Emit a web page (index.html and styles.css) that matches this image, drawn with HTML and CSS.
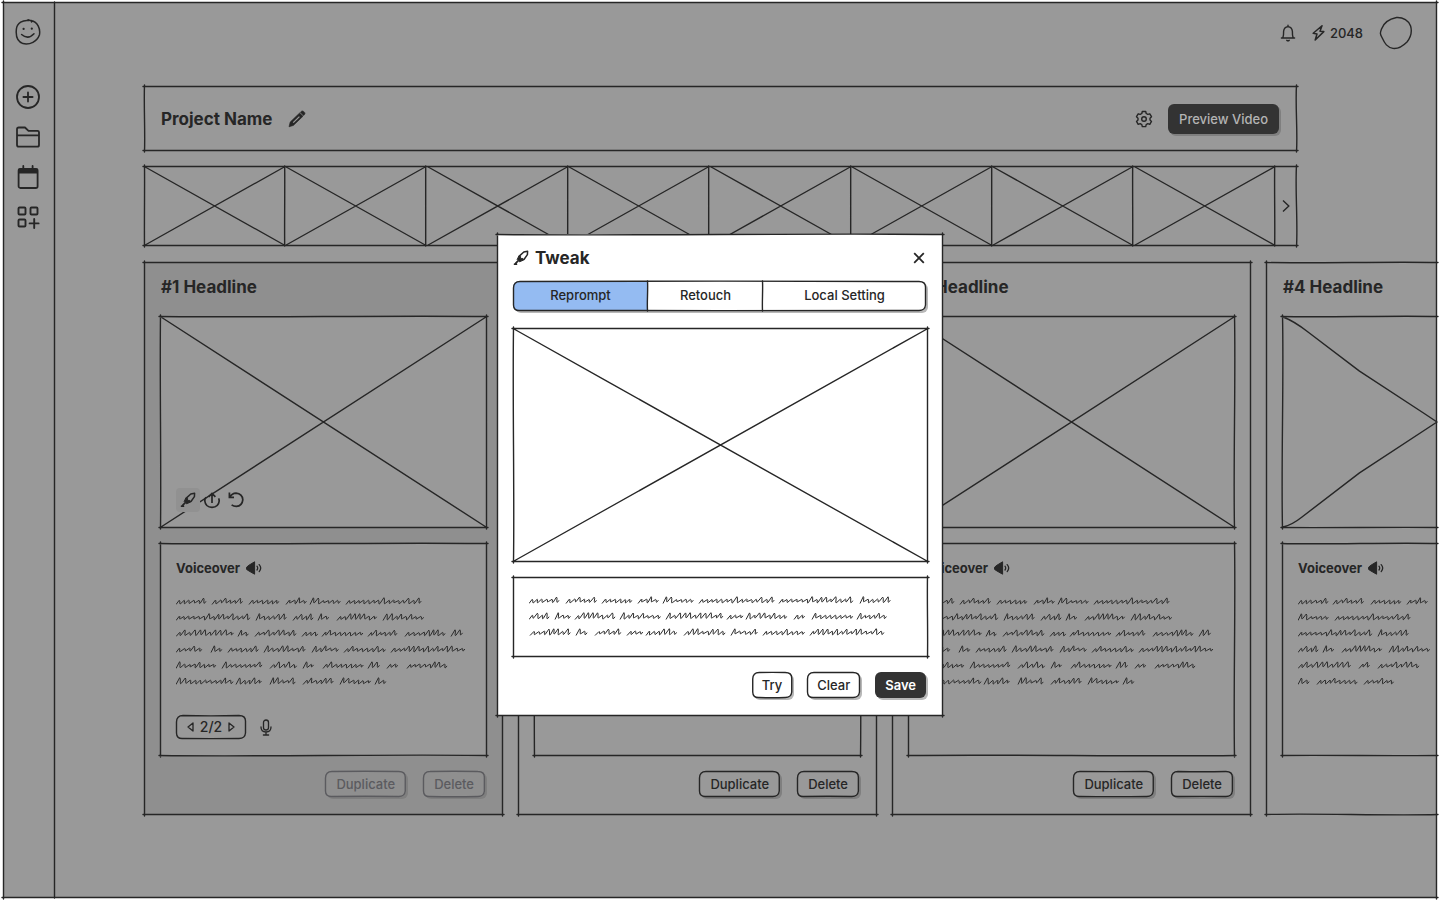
FILE: index.html
```html
<!DOCTYPE html>
<html lang="en">
<head>
<meta charset="utf-8">
<title>Project Name</title>
<link rel="stylesheet" href="styles.css">
</head>
<body>
<svg class="defs" aria-hidden="true">
  <symbol id="i-brush" viewBox="0 0 16 16"><path d="M6 6.400 10.800 2 14.600 1.200 14.400 4.600 10.800 9.800" fill="none" stroke="currentColor" stroke-width="1.500" stroke-linejoin="round"/><path d="M5.800 6 4.200 9.600 6.400 11.800 10.800 10 9.800 8.400 7.600 8.800 7.600 6.400Z" fill="currentColor" stroke="currentColor" stroke-width="1" stroke-linejoin="round"/><path d="M4.800 11.200 2.800 13.200M1.600 14.200h1.800" stroke="currentColor" stroke-width="1.800" stroke-linecap="round" fill="none"/></symbol>
  <symbol id="i-speaker" viewBox="0 0 16 14"><path d="M.6 6.2 3 4.2 8.6.8V13.2L3 10 .6 8.4Z" fill="currentColor" stroke="currentColor" stroke-linejoin="round"/><path d="M11 5.2q1.4 1.9 0 3.8M13.2 3.6q3 3.4 0 7" fill="none" stroke="currentColor" stroke-width="1.3" stroke-linecap="round"/></symbol>
</svg>

<div class="app sketch">
  <aside class="sidebar sketch rail">
    <a class="logo" href="#" aria-label="Home"><svg width="26" height="26" viewBox="0 0 26 26" fill="none" stroke="currentColor" stroke-width="1.5" stroke-linecap="round"><path d="M14 1.6C8 .6 2 4 1.4 10 .6 17 2 22.600 8 24.600 15 26 22 22.600 24.400 16 25.600 10 23 3 16 1.600L13 .8M16 1.600 16.600 3"/><path d="M6.600 15.500q6.400 5.600 12.400-.8"/><path d="M8.600 9.800v.1M16.800 9.600v.1" stroke-width="2.200"/></svg></a>
    <nav class="nav">
      <button aria-label="New"><svg width="24" height="24" viewBox="0 0 24 24" fill="none" stroke="currentColor" stroke-width="1.800" stroke-linecap="round"><circle cx="12" cy="12" r="11"/><path d="M12 7.400v9.200M7.400 12h9.200"/></svg></button>
      <button aria-label="Folders"><svg width="24" height="24" viewBox="0 0 24 24" fill="none" stroke="currentColor" stroke-width="1.800" stroke-linejoin="round"><path d="M1 4.200Q1 2.500 2.700 2.500H9L12.500 5.800H21.500Q23 5.800 23 7.300V20Q23 21.700 21.300 21.700H2.700Q1 21.700 1 20ZM1 10.400H23"/></svg></button>
      <button aria-label="Calendar"><svg width="24" height="24" viewBox="0 0 24 24" fill="none" stroke="currentColor" stroke-width="1.800" stroke-linecap="round"><rect x="2.600" y="4" width="19" height="19" rx="1.800"/><path d="M3.500 4.500H20.700V7.600H3.500Z" fill="currentColor"/><path d="M7.300 1v3M16.600 1v3"/></svg></button>
      <button aria-label="Add widget"><svg width="24" height="24" viewBox="0 0 24 24" fill="none" stroke="currentColor" stroke-width="1.900" stroke-linecap="round"><rect x="2.500" y="2.500" width="7" height="7" rx="1"/><rect x="14.500" y="2.500" width="7" height="7" rx="1"/><rect x="2.500" y="14.500" width="7" height="7" rx="1"/><path d="M18.200 14v9M13.600 18.400h9"/></svg></button>
    </nav>
  </aside>

  <main class="main">
    <header class="topbar">
      <button aria-label="Notifications"><svg width="16" height="18" viewBox="0 0 16 18" fill="none" stroke="currentColor" stroke-width="1.400" stroke-linecap="round" stroke-linejoin="round"><path d="M8 1.200v1.400M1.400 14H14.600M2.800 14Q3.800 11 3.600 7.400 4 3 8 2.600 12 3 12.400 7.400 12.200 11 13.200 14M6.800 16.300q1.200.8 2.400 0"/></svg></button>
      <span class="credits"><svg width="13" height="16" viewBox="0 0 13 16" fill="none" stroke="currentColor" stroke-width="1.500" stroke-linejoin="round"><path d="M10 .8 1.200 8.200 5 9 3.200 15 11.800 6.600 8 6.200Z"/></svg>2048</span>
      <button aria-label="Account"><svg width="34" height="34" viewBox="0 0 34 34" fill="none" stroke="currentColor" stroke-width="1.400"><path d="M17.500 1.500C24 1 30 5 31.600 10 33 15 32 21 28 26 24 30 19 33 14 32.400 8 31 6 28 3 21.500 1 18 1 17 2.500 13 5 6 10 3 17.500 1.500Z"/></svg></button>
    </header>

    <div class="board">
      <section class="project sketch">
        <h1>Project Name</h1>
        <button aria-label="Rename"><svg width="18" height="18" viewBox="0 0 18 18"><path d="M1 16.800 2.200 12 11.600 3 15 6.200 5.400 15.400ZM12.400 2.200 13.600 1.200Q14.600.6 15.600 1.400L16.600 2.400Q17.400 3.400 16.600 4.400L15.600 5.500Z" fill="currentColor" stroke="currentColor" stroke-width=".6" stroke-linejoin="round"/><path d="M5.200 12.600 11.400 6.600" stroke="#999" stroke-width="1.300"/></svg></button>
        <button class="gear" aria-label="Settings"><svg width="18" height="18" viewBox="0 0 18 18" fill="none" stroke="currentColor" stroke-width="1.400" stroke-linejoin="round"><path d="M7.300 1.500H10.700L11.200 3.500 12.800 4.400 14.800 3.800 16.500 6.700 15 8.200V9.900L16.500 11.400 14.800 14.300 12.800 13.700 11.200 14.600 10.700 16.600H7.300L6.800 14.600 5.200 13.700 3.200 14.300 1.500 11.400 3 9.900V8.200L1.500 6.700 3.200 3.800 5.200 4.400 6.800 3.500Z"/><circle cx="9" cy="9" r="2.300"/></svg></button>
        <button class="btn preview">Preview Video</button>
      </section>

      <section class="strip sketch" aria-label="Scenes">
        <div class="thumb sketch rail cross"></div><div class="thumb sketch rail cross"></div><div class="thumb sketch rail cross"></div><div class="thumb sketch rail cross"></div><div class="thumb sketch rail cross"></div><div class="thumb sketch rail cross"></div><div class="thumb sketch rail cross"></div><div class="thumb sketch rail cross"></div>
        <button class="next" aria-label="Next scenes"><svg width="8" height="14" viewBox="0 0 8 14" fill="none" stroke="currentColor" stroke-width="1.400"><path d="M1 1.500 6.800 7 1 12.500"/></svg></button>
      </section>

      <div class="cards">
        <article class="card active sketch">
          <h2>#1 Headline</h2>
          <div class="picture sketch cross">
            <div class="tools">
              <button class="on" aria-label="Tweak"><svg width="16" height="16"><use href="#i-brush"/></svg></button>
              <button aria-label="Upload"><svg width="18" height="18" viewBox="0 0 18 18" fill="none" stroke="currentColor" stroke-width="1.700"><path d="M3 6.400Q1.600 7.600 1.800 10 2.600 16.200 9 16.400 15.600 16 16.200 10 16.200 8.600 15.600 7.400M9 12V3M5.600 5.800 9 2.400 12.400 5.800"/></svg></button>
              <button aria-label="Undo"><svg width="18" height="18" viewBox="0 0 18 18" fill="none" stroke="currentColor" stroke-width="1.700"><path d="M2.400 1.600V6.400H7M2.800 6Q5 2.400 9 2.200 15.400 2.800 15.800 8.800 15.200 14.800 9.400 15.400 6.600 15.400 4.600 13.800"/></svg></button>
            </div>
          </div>
          <div class="voice sketch">
            <h3>Voiceover <svg width="16" height="14"><use href="#i-speaker"/></svg></h3>
            <div class="scribble" data-text="body"></div>
            <div class="takes">
              <div class="pager sketch round">
                <button aria-label="Previous take"><svg width="7" height="10" viewBox="0 0 7 10"><path d="M6 1V9L1 5Z" fill="none" stroke="currentColor" stroke-width="1.300" stroke-linejoin="round"/></svg></button>
                <span>2/2</span>
                <button aria-label="Next take"><svg width="7" height="10" viewBox="0 0 7 10"><path d="M1 1V9L6 5Z" fill="none" stroke="currentColor" stroke-width="1.300" stroke-linejoin="round"/></svg></button>
              </div>
              <button aria-label="Record"><svg width="12" height="17" viewBox="0 0 12 17" fill="none" stroke="currentColor" stroke-width="1.300" stroke-linecap="round"><rect x="3.500" y="1" width="5" height="10" rx="2.500"/><path d="M1 8Q1 13 6 13T11 8M6 13V16M3.400 16H8.600"/></svg></button>
            </div>
          </div>
          <footer><button class="btn sketch round" disabled>Duplicate</button><button class="btn sketch round" disabled>Delete</button></footer>
        </article>

        <article class="card sketch">
          <h2>#2 Headline</h2>
          <div class="picture sketch cross"></div>
          <div class="voice sketch"><h3>Voiceover <svg width="16" height="14"><use href="#i-speaker"/></svg></h3><div class="scribble" data-text="body"></div></div>
          <footer><button class="btn sketch round">Duplicate</button><button class="btn sketch round">Delete</button></footer>
        </article>

        <article class="card sketch">
          <h2>#3 Headline</h2>
          <div class="picture sketch cross"></div>
          <div class="voice sketch"><h3>Voiceover <svg width="16" height="14"><use href="#i-speaker"/></svg></h3><div class="scribble" data-text="body"></div></div>
          <footer><button class="btn sketch round">Duplicate</button><button class="btn sketch round">Delete</button></footer>
        </article>

        <article class="card cut sketch open">
          <h2>#4 Headline</h2>
          <div class="picture sketch open wedge"></div>
          <div class="voice sketch open"><h3>Voiceover <svg width="16" height="14"><use href="#i-speaker"/></svg></h3><div class="scribble" data-text="short"></div></div>
        </article>
      </div>
    </div>
  </main>
</div>

<div class="overlay">
  <section class="modal sketch" role="dialog" aria-labelledby="modal-title">
    <header>
      <svg width="16" height="16"><use href="#i-brush"/></svg>
      <h2 id="modal-title">Tweak</h2>
      <button aria-label="Close"><svg width="12" height="12" viewBox="0 0 12 12" fill="none" stroke="currentColor" stroke-width="1.800"><path d="M1.200 1.200 10.800 10.800M10.800 1.200 1.200 10.800"/></svg></button>
    </header>
    <div class="tabs sketch round" role="tablist">
      <button class="sketch rail" role="tab" aria-selected="true">Reprompt</button>
      <button class="sketch rail" role="tab" aria-selected="false">Retouch</button>
      <button role="tab" aria-selected="false">Local Setting</button>
    </div>
    <div class="shot sketch cross"></div>
    <div class="prompt sketch"><div class="scribble" data-text="prompt"></div></div>
    <footer><button class="btn sketch round">Try</button><button class="btn sketch round">Clear</button><button class="btn dark">Save</button></footer>
  </section>
</div>
<script src="sketch.js"></script>
</body>
</html>
```

FILE: styles.css
```css
:root {
  --ink: #262626;
  --dim: #999;
  --dim-active: #8f8f8f;
}
* { box-sizing: border-box; }
body {
  margin: 0;
  padding: 2px 3px;
  background: #fff;
  color: var(--ink);
  font: 500 13px/20px Inter, "Open Sans", sans-serif;
}
h1, h2, h3 { margin: 0; font-weight: 700; }
button {
  margin: 0;
  padding: 0;
  border: 0;
  background: none;
  color: inherit;
  font: inherit;
}
svg { display: block; flex: none; }
.defs { position: absolute; width: 0; height: 0; }
.sketch { position: relative; }
.outline {
  position: absolute;
  inset: 0;
  width: 100%;
  height: 100%;
  overflow: visible;
  pointer-events: none;
  fill: none;
  stroke: currentColor;
  stroke-width: 1.4;
  stroke-linecap: round;
  stroke-linejoin: round;
}

.app {
  display: flex;
  min-height: calc(100vh - 4px);
  background: var(--dim);
}
.sidebar {
  flex: none;
  width: 52px;
  padding-top: 17px;
}
.logo { display: grid; place-items: center; padding-right: 2px; color: inherit; }
.nav { display: flex; flex-direction: column; margin-top: 32px; padding-right: 2px; }
.nav button { display: grid; place-items: center; height: 40px; }

.main { flex: 1; min-width: 0; }
.topbar {
  display: flex;
  align-items: center;
  justify-content: flex-end;
  gap: 16px;
  height: 84px;
  padding: 0 24px 22px 0;
}
.credits { display: flex; align-items: center; gap: 5px; }

.board { padding-left: 89px; }
.project {
  display: flex;
  align-items: center;
  height: 65px;
  margin: 0 140px 15px 0;
  padding: 0 18px 0 17px;
}
h1 { margin-right: 16px; font-size: 17px; line-height: 24px; }
.gear { margin: 0 15px 0 auto; }
.btn {
  padding: 0 11px;
  height: 26px;
  border-radius: 6px;
  line-height: 24px;
  box-shadow: 2px 2px 0 #7f7f7f;
}
.preview {
  height: 30px;
  line-height: 28px;
  background: #333;
  color: #b4b4b4;
}
.strip {
  display: flex;
  height: 80px;
  margin: 0 140px 16px 0;
}
.thumb { flex: 1; }
.next { display: grid; place-items: center; width: 22px; }

.cards { display: flex; gap: 15px; }
.card { flex: 0 0 359px; min-height: 553px; padding: 13px 16px 17px; }
.card.active { background: var(--dim-active); }
.card.cut { flex: 1 1 0; min-width: 0; padding-right: 0; }
.card h2 { padding-left: 1px; font-size: 17px; line-height: 24px; }
.picture { height: 212px; margin-top: 17px; background: var(--dim); }
.voice { height: 213px; margin-top: 15px; padding: 15px 16px; background: var(--dim); }
.voice h3 { display: flex; align-items: center; gap: 6px; font-size: 13px; line-height: 20px; }
.voice .scribble { margin-top: 15px; }
.scribble svg { color: #2c2c2c; }
.tools {
  position: absolute;
  left: 16px;
  bottom: 16px;
  display: flex;
}
.tools button { display: grid; place-items: center; width: 24px; height: 24px; border-radius: 4px; }
.tools .on { background: #919191; }
.takes { display: flex; align-items: center; gap: 14px; margin-top: 26px; }
.pager { display: flex; align-items: center; justify-content: center; gap: 6px; width: 70px; height: 24px; font-size: 14px; }
.card footer { display: flex; justify-content: flex-end; gap: 17px; margin-top: 15px; padding-right: 2px; }
.card .btn:disabled { color: #5b5b5f; }

.overlay {
  position: fixed;
  inset: 0;
  display: flex;
  align-items: center;
  justify-content: center;
  padding-top: 50px;
}
.modal { width: 446px; padding: 12px 15px 18px 16px; background: #fff; }
.modal header { display: flex; align-items: center; gap: 6px; height: 24px; }
.modal header h2 { font-size: 17px; line-height: 24px; }
.modal header button { margin: 0 3px 0 auto; }
.tabs {
  display: flex;
  height: 30px;
  margin: 11px 2px 17px 0;
  border-radius: 6px;
  box-shadow: 2px 2px 0 #b8b8b8;
}
.tabs button { flex: 115; padding-bottom: 2px; }
.tabs button:first-of-type { flex: 135; border-radius: 6px 0 0 6px; background: #94bbf2; }
.tabs button:last-of-type { flex: 163; }
.shot { height: 234px; }
.prompt { height: 80px; margin-top: 15px; padding: 15px 16px; }
.modal footer { display: flex; justify-content: flex-end; gap: 15px; margin: 15px 2px 0 0; }
.modal .btn { padding: 0 10px; box-shadow: 2px 2px 0 #b8b8b8; }
.modal .dark { background: #333; color: #fff; font-weight: 600; }
```

FILE: sketch.js
```js
// Hand-drawn outlines, crossed picture boxes and scribbled copy.
const NS = 'http://www.w3.org/2000/svg';

function random(seed) {
  let s = seed * 7919 + 17;
  return () => {
    s = (s * 16807) % 2147483647;
    return s / 2147483647;
  };
}

function makeSvg(w, h, d) {
  const svg = document.createElementNS(NS, 'svg');
  svg.setAttribute('viewBox', `0 0 ${w} ${h}`);
  svg.setAttribute('aria-hidden', 'true');
  const path = document.createElementNS(NS, 'path');
  path.setAttribute('d', d);
  svg.append(path);
  return svg;
}

function edge(x1, y1, x2, y2, wobble) {
  const dx = x2 - x1, dy = y2 - y1;
  const len = Math.hypot(dx, dy) || 1;
  const nx = -dy / len * wobble, ny = dx / len * wobble;
  return `M${x1} ${y1}C${x1 + dx * .3 + nx} ${y1 + dy * .3 + ny} ${x1 + dx * .7 - nx} ${y1 + dy * .7 - ny} ${x2} ${y2}`;
}

function outline(el, seed) {
  const w = el.clientWidth, h = el.clientHeight, r = random(seed);
  const has = name => el.classList.contains(name);
  const wob = () => (r() - .5) * 3;
  let d;
  if (has('rail')) {
    d = edge(w - .5, 0, w - .5, h, wob() / 2);
  } else if (has('round')) {
    d = `M7 .5Q${w / 2} ${.5 + wob() / 2} ${w - 7} .5Q${w - .5} .5 ${w - .5} 6V${h - 6}Q${w - 1} ${h - .5} ${w - 7} ${h - .5}Q${w / 2} ${h - .5 + wob() / 2} 7 ${h - .5}Q.5 ${h} .5 ${h - 6}V7Q.5 .5 7 .5Z`;
  } else {
    d = edge(-1, .5, w + 1, .5, wob()) + edge(-1, h - .5, w + 1, h - .5, wob()) + edge(.5, -1, .5, h + 1, wob());
    if (!has('open')) d += edge(w - .5, -1, w - .5, h + 1, wob());
  }
  if (has('cross')) d += `M1 1L${w - 1} ${h - 1}M${w - 1} 1L1 ${h - 1}`;
  if (has('wedge')) d += `M1 1Q12 5 26 16L${w / 2} ${h * .26}L${w - 12} ${h / 2 - 8}L${w} ${h / 2}L${w / 2} ${h * .74}L20 ${h - 11}Q10 ${h - 3} 1 ${h - 1}`;
  const svg = makeSvg(w, h, d);
  svg.classList.add('outline');
  if (has('picture')) el.prepend(svg);
  else el.append(svg);
}

// Each line lists start and width of its words.
const copy = {
  body: [
    [0,31, 36,31, 73,30, 110,20, 134,31, 170,75],
    [0,75, 80,30, 117,21, 142,13, 161,41, 207,41],
    [0,56, 62,12, 79,41, 126,14, 146,39, 192,30, 229,40, 275,12],
    [0,27, 35,12, 52,31, 88,41, 136,27, 168,41, 215,74],
    [0,41, 46,42, 94,27, 127,12, 147,40, 192,13, 211,13, 231,41],
    [0,55, 60,28, 94,27, 127,30, 164,30, 199,13]
  ],
  short: [
    [0,30, 35,31, 73,30, 109,21],
    [0,30, 37,74],
    [0,74, 80,30],
    [0,21, 25,13, 44,41, 91,40],
    [0,55, 61,13, 80,40],
    [0,12, 19,41, 66,29]
  ],
  prompt: [
    [0,30, 37,30, 73,31, 109,20, 134,31, 170,75, 250,75, 331,30],
    [0,22, 26,14, 46,39, 91,41, 137,56, 198,14, 217,41, 265,12, 283,40, 328,32],
    [1,40, 47,13, 66,27, 98,14, 117,32, 155,41, 202,27, 234,41, 281,75]
  ]
};

function scribble(el) {
  const lines = copy[el.dataset.text], r = random(5);
  const h = lines.length * 16;
  let w = 0, d = '';
  lines.forEach((line, row) => {
    const base = row * 16 + 11;
    for (let i = 0; i < line.length; i += 2) {
      const end = line[i] + line[i + 1];
      let x = line[i];
      w = Math.max(w, end + 2);
      d += `M${x} ${base + .5}`;
      while (x < end - 4) {
        const top = base - (r() > .65 ? 6.4 : 4) + r() * .6;
        const px = x + 3.2 + r() * .8;
        const foot = base - r() * 1.2;
        const fx = px + r() * .6;
        d += `L${px.toFixed(1)} ${top.toFixed(1)}Q${(px + .9).toFixed(1)} ${top.toFixed(1)} ${fx.toFixed(1)} ${(foot - .8).toFixed(1)}Q${fx.toFixed(1)} ${(foot + .7).toFixed(1)} ${(fx + 1).toFixed(1)} ${(foot - .4).toFixed(1)}`;
        x = fx + 1;
      }
      d += 'l1.2-1.6';
    }
  });
  const svg = makeSvg(w, h, d);
  svg.setAttribute('width', w);
  svg.setAttribute('height', h);
  svg.setAttribute('fill', 'none');
  svg.setAttribute('stroke', 'currentColor');
  svg.setAttribute('stroke-width', '1');
  svg.setAttribute('stroke-linejoin', 'round');
  el.append(svg);
}

function drawOutlines() {
  document.querySelectorAll('.outline').forEach(svg => svg.remove());
  document.querySelectorAll('.sketch').forEach((el, i) => outline(el, i + 1));
}

document.querySelectorAll('.scribble').forEach(scribble);
drawOutlines();
window.addEventListener('resize', drawOutlines);
```
